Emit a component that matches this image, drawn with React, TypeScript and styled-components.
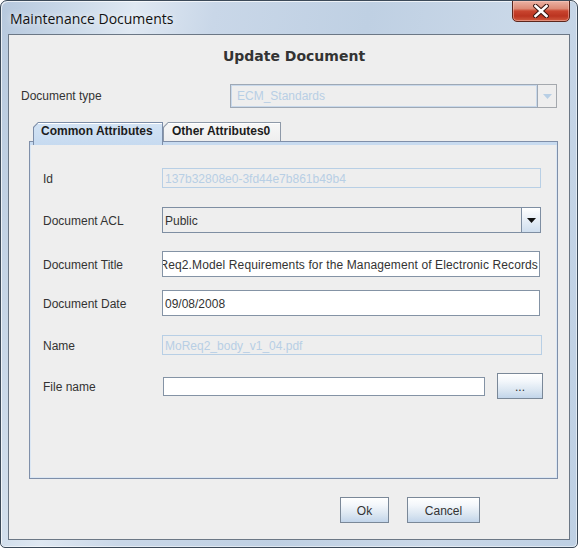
import React from 'react';
import styled, { createGlobalStyle } from 'styled-components';

const Global = createGlobalStyle`
  html, body { margin: 0; padding: 0; background: #ffffff; }
  #root { width: 578px; height: 548px; }
  * { box-sizing: border-box; }
`;

const Window = styled.div`
  width: 578px;
  height: 548px;
  border: 1px solid #3c4a59;
  border-radius: 7px 7px 5px 5px;
  background: linear-gradient(100deg, #b6c8dd 0%, #cddbea 12%, #dfe8f2 20%, #c9d7e8 32%, #bfd0e3 55%, #cad8e8 78%, #bed0e4 100%);
  box-shadow: inset 1px 1px 0 rgba(255, 255, 255, 0.7), inset -1px -1px 0 rgba(255, 255, 255, 0.5);
  display: flex;
  flex-direction: column;
  padding: 0 7px 7px 7px;
  overflow: hidden;
`;

const TitleBar = styled.div`
  height: 33px;
  display: flex;
  justify-content: space-between;
  align-items: flex-start;
`;

const TitleText = styled.div`
  font-family: "Open Sans", "Noto Sans", sans-serif;
  font-size: 14px;
  line-height: 18px;
  color: #111;
  margin-top: 9px;
  padding-left: 2px;
  text-shadow: 0 0 6px rgba(255, 255, 255, 0.9);
`;

const CloseButton = styled.div`
  width: 58px;
  height: 22px;
  margin-top: -1px;
  border: 1px solid #5c261d;
  border-radius: 0 0 5px 5px;
  background: linear-gradient(180deg, #eab2a4 0%, #dc8a76 38%, #c9452f 50%, #bb3420 75%, #cf5a3f 100%);
  box-shadow: inset 0 0 0 1px rgba(255, 210, 200, 0.45);
  display: flex;
  align-items: center;
  justify-content: center;
`;

const Content = styled.div`
  flex: 1;
  background: #eeeeee;
  border: 1px solid #6b7785;
  display: flex;
  flex-direction: column;
  font-family: "Liberation Sans", Arial, sans-serif;
  font-size: 12px;
  color: #333333;
`;

const Heading = styled.div`
  margin-top: 11px;
  height: 20px;
  line-height: 20px;
  text-align: center;
  padding-left: 10px;
  font-family: "DejaVu Sans", Verdana, sans-serif;
  font-weight: bold;
  font-size: 14px;
  color: #333333;
`;

const TypeRow = styled.div`
  margin-top: 18px;
  height: 24px;
  display: flex;
  align-items: center;
  padding-left: 12px;
`;

const TypeLabel = styled.div`
  width: 209px;
`;

const DisabledCombo = styled.div`
  width: 327px;
  height: 24px;
  display: flex;
`;

const DisabledComboText = styled.div`
  flex: 1;
  border: 1px solid #9ea8b5;
  box-shadow: inset 0 0 0 1px #c9d9eb;
  color: #b8cfe5;
  padding-left: 6px;
  display: flex;
  align-items: center;
`;

const DisabledComboArrow = styled.div`
  width: 19px;
  border: 1px solid #a4a8ad;
  border-left: none;
  display: flex;
  align-items: center;
  justify-content: center;
`;

const TabArea = styled.div`
  margin: 14px 11px 0 20px;
  display: flex;
  flex-direction: column;
`;

const TabRow = styled.div`
  height: 19px;
  display: flex;
  align-items: flex-start;
  padding-left: 4px;
  position: relative;
  z-index: 1;
`;

const TabShape = styled.div<{ $selected?: boolean; $width: number }>`
  width: ${p => p.$width}px;
  height: ${p => (p.$selected ? 23 : 19)}px;
  background: ${p => (p.$selected ? '#7c8da8' : '#8e99a8')};
  clip-path: polygon(5px 0, 100% 0, 100% 100%, 0 100%, 0 5px);
  padding: 1px 1px 0 1px;
  display: flex;
`;

const TabFace = styled.div<{ $selected?: boolean; $pad: number }>`
  flex: 1;
  clip-path: polygon(4.5px 0, 100% 0, 100% 100%, 0 100%, 0 4.5px);
  background: ${p =>
    p.$selected
      ? 'linear-gradient(180deg, #d3e3f4 0%, #c6daf0 100%)'
      : 'linear-gradient(180deg, #f7f7f7 0%, #eeeeee 100%)'};
  box-shadow: inset 0 1px 0 #ffffff;
  padding-left: ${p => p.$pad}px;
  font-weight: bold;
  font-size: 12px;
  color: #1c1c1c;
  line-height: 17px;
  white-space: nowrap;
`;

const Panel = styled.div`
  height: 338px;
  border: 1px solid #7f8fa9;
  box-shadow: inset 0 3px 0 #c8dbf0, inset 1px 0 0 #dbe7f4, inset -1px 0 0 #dbe7f4, inset 0 -1px 0 #dbe7f4;
  padding-top: 26px;
  display: flex;
  flex-direction: column;
`;

const Row = styled.div<{ $top: number; $h: number }>`
  margin-top: ${p => p.$top}px;
  height: ${p => p.$h}px;
  display: flex;
  align-items: center;
`;

const Label = styled.div`
  width: 132px;
  padding-left: 13px;
  padding-top: 1px;
  color: #333333;
`;

const Field = styled.div<{ $w: number; $h: number; $disabled?: boolean; $end?: boolean }>`
  width: ${p => p.$w}px;
  height: ${p => p.$h}px;
  border: 1px solid ${p => (p.$disabled ? '#b8cfe5' : '#8493a5')};
  background: ${p => (p.$disabled ? '#eeeeee' : '#ffffff')};
  color: ${p => (p.$disabled ? '#b8cfe5' : '#333333')};
  padding: 1px 1px 0 2px;
  display: flex;
  align-items: center;
  justify-content: ${p => (p.$end ? 'flex-end' : 'flex-start')};
  overflow: hidden;
  white-space: nowrap;
`;

const ScrolledText = styled.span`
  flex-shrink: 0;
  white-space: nowrap;
  letter-spacing: 0.12px;
`;

const Combo = styled.div`
  width: 379px;
  height: 26px;
  border: 1px solid #7e8ea2;
  background: #eeeeee;
  display: flex;
`;

const ComboText = styled.div`
  flex: 1;
  padding: 1px 0 0 2px;
  display: flex;
  align-items: center;
  color: #333333;
`;

const ComboArrow = styled.div`
  width: 19px;
  border-left: 1px solid #7e8ea2;
  background: linear-gradient(180deg, #ffffff 0%, #eef3f9 35%, #cfdeee 100%);
  display: flex;
  align-items: center;
  justify-content: center;
`;

const FileField = styled(Field)`
  margin-left: 1px;
`;

const Button = styled.div<{ $w: number }>`
  width: ${p => p.$w}px;
  height: 26px;
  border: 1px solid #7a8898;
  background: linear-gradient(180deg, #ffffff 0%, #f3f7fb 30%, #d9e5f1 70%, #c2d5ea 100%);
  box-shadow: inset 0 1px 0 #ffffff;
  display: flex;
  align-items: center;
  justify-content: center;
  padding-top: 1px;
  color: #333333;
  font-size: 12px;
`;

const BrowseButton = styled(Button)`
  margin-left: 12px;
`;

const ButtonRow = styled.div`
  margin-top: 18px;
  display: flex;
  justify-content: flex-end;
  gap: 18px;
  padding-right: 89px;
`;

const Triangle = ({ color }: { color: string }) => (
  <svg width="9" height="5" viewBox="0 0 9 5">
    <polygon points="0,0 9,0 4.5,5" fill={color} />
  </svg>
);

export default function App() {
  return (
    <>
      <Global />
      <Window>
        <TitleBar>
          <TitleText>Maintenance Documents</TitleText>
          <CloseButton>
            <svg width="16" height="14" viewBox="0 0 16 14">
              <path d="M2.5 2 L13.5 12 M13.5 2 L2.5 12" stroke="#3a1712" strokeWidth="4.6" strokeLinecap="square" />
              <path d="M2.5 2 L13.5 12 M13.5 2 L2.5 12" stroke="#ffffff" strokeWidth="2.6" strokeLinecap="square" />
            </svg>
          </CloseButton>
        </TitleBar>
        <Content>
          <Heading>Update Document</Heading>
          <TypeRow>
            <TypeLabel>Document type</TypeLabel>
            <DisabledCombo>
              <DisabledComboText>ECM_Standards</DisabledComboText>
              <DisabledComboArrow>
                <Triangle color="#b8cfe5" />
              </DisabledComboArrow>
            </DisabledCombo>
          </TypeRow>
          <TabArea>
            <TabRow>
              <TabShape $selected $width={130}>
                <TabFace $selected $pad={7}>Common Attributes</TabFace>
              </TabShape>
              <TabShape $width={118}>
                <TabFace $pad={8}>Other Attributes0</TabFace>
              </TabShape>
            </TabRow>
            <Panel>
              <Row $top={0} $h={20}>
                <Label>Id</Label>
                <Field $w={379} $h={20} $disabled>
                  137b32808e0-3fd44e7b861b49b4
                </Field>
              </Row>
              <Row $top={19} $h={26}>
                <Label>Document ACL</Label>
                <Combo>
                  <ComboText>Public</ComboText>
                  <ComboArrow>
                    <Triangle color="#111111" />
                  </ComboArrow>
                </Combo>
              </Row>
              <Row $top={18} $h={26}>
                <Label>Document Title</Label>
                <Field $w={378} $h={26} $end>
                  <ScrolledText>MoReq2.Model Requirements for the Management of Electronic Records</ScrolledText>
                </Field>
              </Row>
              <Row $top={13} $h={26}>
                <Label>Document Date</Label>
                <Field $w={378} $h={26}>
                  09/08/2008
                </Field>
              </Row>
              <Row $top={19} $h={20}>
                <Label>Name</Label>
                <Field $w={380} $h={20} $disabled>
                  MoReq2_body_v1_04.pdf
                </Field>
              </Row>
              <Row $top={18} $h={26}>
                <Label>File name</Label>
                <FileField $w={322} $h={19} />
                <BrowseButton $w={46}>...</BrowseButton>
              </Row>
            </Panel>
          </TabArea>
          <ButtonRow>
            <Button $w={49}>Ok</Button>
            <Button $w={73}>Cancel</Button>
          </ButtonRow>
        </Content>
      </Window>
    </>
  );
}
